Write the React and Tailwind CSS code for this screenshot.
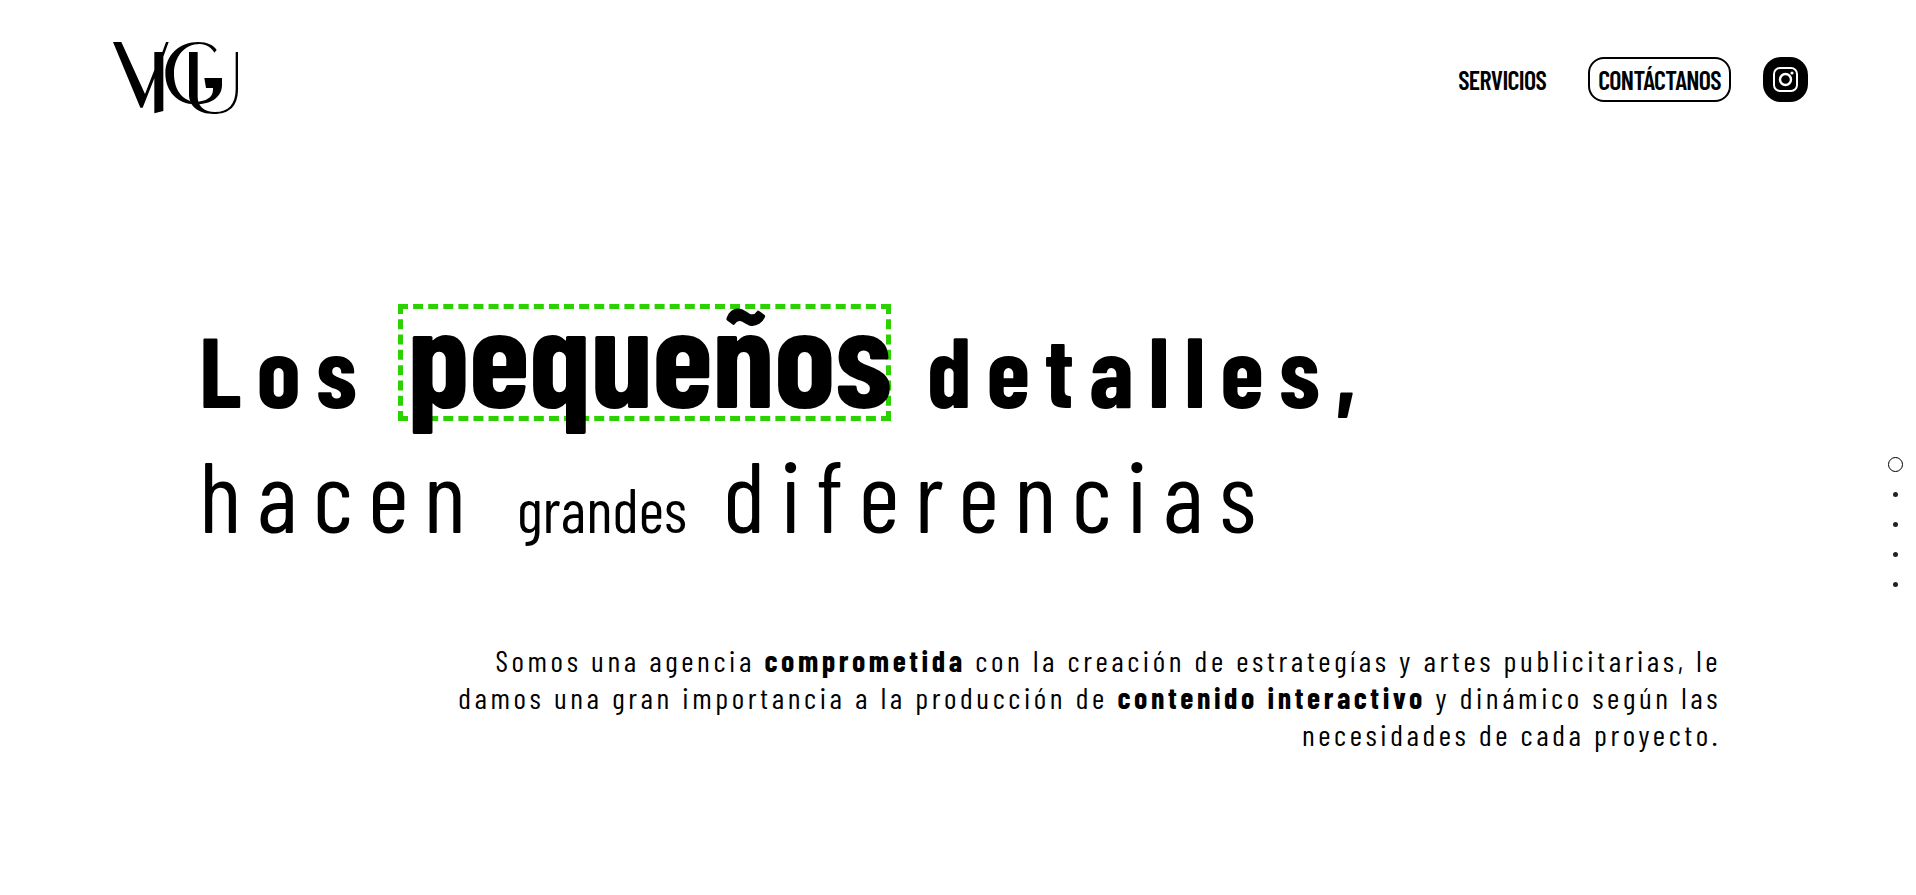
function Logo() {
  return (
    <svg viewBox="24 21 375 216" className="h-[72px] w-[125px]" fill="currentColor" role="img" aria-label="VIGU">
      <path d="M24 21H49L120 177L148 105V51H172L183 21H191L175 65V228L148 235V130L113 218H106Z" />
      <path d="M328 53C320 38 304 27 284 27C238 27 207 66 207 116C207 168 236 200 274 200C302 200 324 187 324 165V159H303L298 129H351V150C351 184 322 208 270 208C218 208 181 170 181 115C181 60 224 21 280 21C306 21 326 30 335 45Z" />
      <path d="M252 51H278V186C278 214 298 231 330 231C371 231 392 207 392 162V51H399V162C399 213 374 237 326 237C280 237 252 214 252 178Z" />
    </svg>
  );
}

function InstagramIcon() {
  return (
    <svg viewBox="0 0 25 25" className="size-[25px]" fill="none" stroke="currentColor" strokeWidth="2" aria-hidden="true">
      <rect x="1" y="1" width="23" height="23" rx="6" />
      <circle cx="12.5" cy="12.5" r="5.5" strokeWidth="2.4" />
      <circle cx="19" cy="6" r="1.6" fill="currentColor" stroke="none" />
    </svg>
  );
}

const sections = ["Inicio", "Agencia", "Servicios", "Proyectos", "Contacto"];

export default function App() {
  return (
    <div className="min-h-screen bg-white font-['Barlow_Condensed','Roboto_Condensed',sans-serif] text-black">
      <header className="flex items-center justify-between pl-[113px] pr-[108px] pt-[42px]">
        <a href="#inicio">
          <Logo />
        </a>
        <nav className="flex items-center gap-8 pt-0.5 text-[26px] font-semibold leading-[41px] tracking-tight">
          <a href="#servicios" className="px-2.5">SERVICIOS</a>
          <a href="#contacto" className="rounded-2xl border-2 border-black px-2">CONTÁCTANOS</a>
          <a
            href="#instagram"
            aria-label="Instagram"
            className="flex size-[45px] items-center justify-center rounded-[18px] bg-black text-white"
          >
            <InstagramIcon />
          </a>
        </nav>
      </header>

      <main className="pl-[199px] pr-[195px] pt-[190px]">
        <h1 className="text-[100px] leading-[125px] tracking-[15px]">
          <span className="flex items-baseline font-bold">
            <span>Los</span>
            <span className="ml-[26px] mr-9 w-[493px] border-[5px] border-dashed border-[#2bd200] pb-5 pl-1 text-[140px] leading-[87px] tracking-[-1px]">
              pequeños
            </span>
            <span>detalles,</span>
          </span>
          <span className="flex items-baseline gap-9 font-normal">
            <span>hacen</span>
            <span className="text-[62px] tracking-normal">grandes</span>
            <span>diferencias</span>
          </span>
        </h1>
        <p className="ml-auto mt-[71px] max-w-[1280px] text-right text-[30px] leading-[37px] tracking-[0.12em]">
          Somos una agencia <b className="font-bold">comprometida</b> con la creación de estrategías y artes publicitarias,
          le damos una gran importancia a la producción de <b className="font-bold">contenido interactivo</b> y dinámico
          según las necesidades de cada proyecto.
        </p>
      </main>

      <nav aria-label="Secciones" className="fixed right-[13px] top-1/2 flex flex-col pt-0.5">
        {sections.map((name, i) => (
          <a key={name} href={"#" + name.toLowerCase()} aria-label={name} className="flex h-[30px] w-[15px] items-center justify-center">
            <span className={i === 0 ? "size-[15px] rounded-full border border-black" : "size-[5px] rounded-full bg-[#222]"} />
          </a>
        ))}
      </nav>
    </div>
  );
}
